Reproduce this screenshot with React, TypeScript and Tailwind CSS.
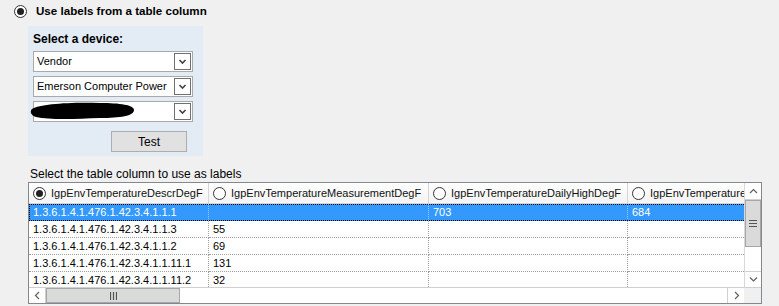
import React from 'react'

const rows = [
  ['1.3.6.1.4.1.476.1.42.3.4.1.1.1', '', '703', '684'],
  ['1.3.6.1.4.1.476.1.42.3.4.1.1.3', '55', '', ''],
  ['1.3.6.1.4.1.476.1.42.3.4.1.1.2', '69', '', ''],
  ['1.3.6.1.4.1.476.1.42.3.4.1.1.11.1', '131', '', ''],
  ['1.3.6.1.4.1.476.1.42.3.4.1.1.11.2', '32', '', ''],
]

const columns = [
  { name: 'IgpEnvTemperatureDescrDegF', w: 'w-[180px]', checked: true },
  { name: 'IgpEnvTemperatureMeasurementDegF', w: 'w-[220px]', checked: false },
  { name: 'IgpEnvTemperatureDailyHighDegF', w: 'w-[199px]', checked: false },
  { name: 'IgpEnvTemperatureDailyLowDegF', w: 'w-[140px]', checked: false },
]

function Radio({ checked }: { checked: boolean }) {
  return (
    <span className="w-[13px] h-[13px] rounded-full border border-[#333] bg-white flex items-center justify-center shrink-0">
      {checked && <span className="w-[7px] h-[7px] rounded-full bg-[#222]" />}
    </span>
  )
}

function Chevron({ dir }: { dir: 'down' | 'up' | 'left' | 'right' }) {
  const d = {
    down: 'M2 3.5 L5.5 7 L9 3.5',
    up: 'M2 7 L5.5 3.5 L9 7',
    left: 'M7 2 L3.5 5.5 L7 9',
    right: 'M4 2 L7.5 5.5 L4 9',
  }[dir]
  return (
    <svg width="11" height="11" viewBox="0 0 11 11">
      <path d={d} fill="none" stroke="#606060" strokeWidth="1.2" />
    </svg>
  )
}

function Combo({ text, redacted }: { text: string; redacted?: boolean }) {
  return (
    <div className="relative w-[160px] h-[21px] bg-white border border-[#a9a9a9] flex items-center">
      <span className="flex-1 pl-[3px] truncate text-black">{text}</span>
      <span className="w-[17px] h-[17px] mr-[1px] border border-[#707070] flex items-center justify-center">
        <svg width="9" height="9" viewBox="0 0 9 9">
          <path d="M1.5 3 L4.5 6 L7.5 3" fill="none" stroke="#444" strokeWidth="1.6" />
        </svg>
      </span>
      {redacted && (
        <svg className="absolute left-[-4px] top-[-2px]" width="110" height="22" viewBox="0 0 110 22">
          <path d="M2 9 C10 4 40 2 70 3 C90 3 104 5 104 10 C104 16 90 18 70 18 C45 19 20 20 6 17 C0 15 0 11 2 9 Z" fill="#000" />
        </svg>
      )}
    </div>
  )
}

export default function App() {
  return (
    <div className="w-[779px] h-[306px] bg-[#f0f0f0] overflow-hidden text-[11px] text-black" style={{ fontFamily: '"Liberation Sans", Arial, sans-serif' }}>
      <div className="flex items-center gap-[9px] pl-[14px] pt-[4px] h-[18px]">
        <Radio checked />
        <span className="font-bold text-[11.6px]">Use labels from a table column</span>
      </div>
      <div className="ml-[28px] mt-[8px] w-[175px] h-[130px] bg-[#e3ebf5] pl-[5px] pt-[5px]">
        <div className="font-bold text-[12px] h-[16px] leading-[16px]">Select a device:</div>
        <div className="flex flex-col gap-[4px] mt-[4px]">
          <Combo text="Vendor" />
          <Combo text="Emerson Computer Power" />
          <Combo text="" redacted />
        </div>
        <div className="flex mt-[9px] ml-[78px]">
          <div className="w-[76px] h-[21px] bg-[#e1e1e1] border border-[#adadad] flex items-center justify-center text-[12px]">Test</div>
        </div>
      </div>
      <div className="ml-[30px] mt-[10px] h-[16px] leading-[16px] text-[12px]">Select the table column to use as labels</div>
      <div className="ml-[28px] w-[734px] h-[122px] border border-[#828790] bg-white flex flex-col">
        <div className="flex h-[104px]">
          <div className="flex-1 overflow-hidden">
            <div className="flex h-[21px] w-max">
              {columns.map((c, i) => (
                <div key={i} className={`${c.w} shrink-0 flex items-center gap-[5px] pl-[4px] bg-gradient-to-b from-white to-[#f3f3f3] border-r border-[#d5d5d5] border-b border-b-[#d5d5d5] overflow-hidden`}>
                  <Radio checked={c.checked} />
                  <span className="whitespace-nowrap text-[11px] text-[#111]">{c.name}</span>
                </div>
              ))}
            </div>
            {rows.map((r, ri) => (
              <div key={ri} className={`flex h-[17px] w-max ${ri === 0 ? 'bg-[#3399ff] text-white outline-1 outline-dotted outline-black -outline-offset-1' : ''}`}>
                {r.map((cell, ci) => (
                  <div key={ci} className={`${columns[ci].w} shrink-0 pl-[4px] leading-[17px] whitespace-nowrap border-r border-dotted ${ri === 0 ? 'border-r-[#9ccaf8]' : 'border-r-[#a0a0a0] border-b border-b-[#a0a0a0]'}`}>
                    {cell}
                  </div>
                ))}
              </div>
            ))}
          </div>
          <div className="w-[17px] flex flex-col bg-[#fafafa] border-l border-[#d8d8d8]">
            <div className="h-[17px] flex items-center justify-center bg-white border-b border-[#d0d0d0]"><Chevron dir="up" /></div>
            <div className="h-[47px] bg-[#dadada] border border-[#a6a6a6] flex items-center justify-center">
              <svg width="8" height="7" viewBox="0 0 8 7"><path d="M0 0.5 H8 M0 3.5 H8 M0 6.5 H8" stroke="#555" strokeWidth="1.2" /></svg>
            </div>
            <div className="flex-1 bg-white" />
            <div className="h-[16px] flex items-center justify-center bg-white border-t border-[#d0d0d0]"><Chevron dir="down" /></div>
          </div>
        </div>
        <div className="flex h-[17px] border-t border-[#d0d0d0]">
          <div className="w-[17px] flex items-center justify-center bg-white border-r border-[#d0d0d0]"><Chevron dir="left" /></div>
          <div className="w-[134px] bg-[#dadada] border border-[#a6a6a6] flex items-center justify-center">
            <svg width="7" height="8" viewBox="0 0 7 8"><path d="M0.5 0 V8 M3.5 0 V8 M6.5 0 V8" stroke="#555" strokeWidth="1.2" /></svg>
          </div>
          <div className="flex-1 bg-white" />
          <div className="w-[17px] flex items-center justify-center bg-white border-l border-[#d0d0d0]"><Chevron dir="right" /></div>
          <div className="w-[17px] bg-[#f0f0f0]" />
        </div>
      </div>
    </div>
  )
}
